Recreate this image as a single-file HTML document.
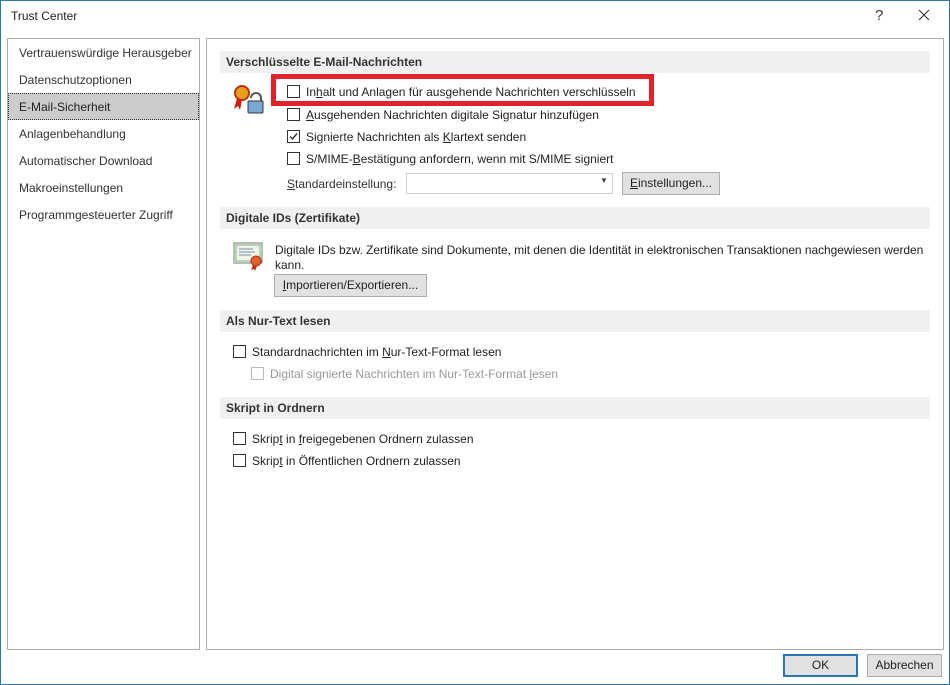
<!DOCTYPE html>
<html><head><meta charset="utf-8"><style>
*{margin:0;padding:0;box-sizing:border-box}
body{width:950px;height:685px;background:#fff;font-family:"Liberation Sans",sans-serif;font-size:12px;color:#222;position:relative;overflow:hidden}
.a{position:absolute;white-space:nowrap}
.win{position:absolute;left:0;top:0;width:950px;height:685px;border:1px solid #2a7ab0}
.panel{position:absolute;border:1px solid #adadad;background:#fff}
.hd{position:absolute;left:220px;width:710px;height:22px;background:#f0f0f0;font-weight:bold;color:#333;padding:4px 0 0 6px}
.cb{position:absolute;width:13px;height:13px;border:1px solid #333;background:#fff}
.cb.dis{border-color:#bbb}
.btn{position:absolute;height:23px;border:1px solid #adadad;background:#e1e1e1;text-align:center;line-height:21px}
u{text-decoration:underline}
.nav{position:absolute;left:19px;color:#333}
</style></head><body>
<div class="win"></div>
<div class="a" style="left:11px;top:9px">Trust Center</div>
<div class="a" style="left:875px;top:7px;font-size:15px;color:#333">?</div>
<svg class="a" style="left:918px;top:9px" width="12" height="12"><path d="M1 1L11 11M11 1L1 11" stroke="#333" stroke-width="1.1"/></svg>

<div class="panel" style="left:7px;top:38px;width:193px;height:612px"></div>
<div class="nav a" style="top:46px">Vertrauenswürdige Herausgeber</div>
<div class="nav a" style="top:73px">Datenschutzoptionen</div>
<div class="a" style="left:8px;top:93px;width:191px;height:27px;background:#cccccc;border:1px dotted #333"></div>
<div class="nav a" style="top:100px;color:#222">E-Mail-Sicherheit</div>
<div class="nav a" style="top:127px">Anlagenbehandlung</div>
<div class="nav a" style="top:154px">Automatischer Download</div>
<div class="nav a" style="top:181px">Makroeinstellungen</div>
<div class="nav a" style="top:208px">Programmgesteuerter Zugriff</div>

<div class="panel" style="left:206px;top:38px;width:738px;height:612px"></div>
<div class="hd" style="top:51px">Verschlüsselte E-Mail-Nachrichten</div>
<svg class="a" style="left:233px;top:84px" width="32" height="30" viewBox="0 0 32 30">
<circle cx="9" cy="9" r="7" fill="#e8a020" stroke="#c03010" stroke-width="2"/>
<path d="M4 14 L1 25 L5 22 L7 26 L9 16Z" fill="#d02010"/>
<path d="M18 14 a5 5 0 0 1 10 0 v4" fill="none" stroke="#555" stroke-width="2"/>
<rect x="15" y="17" width="15" height="12" rx="1" fill="#7aa8d0" stroke="#335" stroke-width="1"/>
</svg>
<div class="a" style="left:271px;top:74px;width:383px;height:32px;border:5px solid #e32129"></div>
<div class="cb" style="left:287px;top:85px"></div>
<div class="a" style="left:306px;top:85px">In<u>h</u>alt und Anlagen für ausgehende Nachrichten verschlüsseln</div>
<div class="cb" style="left:287px;top:108px"></div>
<div class="a" style="left:306px;top:108px"><u>A</u>usgehenden Nachrichten digitale Signatur hinzufügen</div>
<div class="cb" style="left:287px;top:130px"><svg width="11" height="11" style="position:absolute;left:0;top:0"><path d="M2 5.5 L4.5 8 L9 2.5" fill="none" stroke="#333" stroke-width="1.4"/></svg></div>
<div class="a" style="left:306px;top:130px">Signierte Nachrichten als <u>K</u>lartext senden</div>
<div class="cb" style="left:287px;top:152px"></div>
<div class="a" style="left:306px;top:152px">S/MIME-<u>B</u>estätigung anfordern, wenn mit S/MIME signiert</div>
<div class="a" style="left:287px;top:177px;color:#333"><u>S</u>tandardeinstellung:</div>
<div class="a" style="left:406px;top:173px;width:207px;height:21px;border:1px solid #d0d0d0;background:#fff"></div>
<div class="a" style="left:600px;top:176px;font-size:8px;color:#444">▼</div>
<div class="btn" style="left:622px;top:172px;width:98px"><u>E</u>instellungen...</div>

<div class="hd" style="top:207px">Digitale IDs (Zertifikate)</div>
<svg class="a" style="left:233px;top:241px" width="32" height="30" viewBox="0 0 32 30">
<rect x="1" y="2" width="28" height="20" fill="#eef4e8" stroke="#6a8a6a"/>
<rect x="3" y="4" width="24" height="16" fill="none" stroke="#8ab08a"/>
<path d="M6 8h14M6 11h16M6 14h12" stroke="#7a90b0"/>
<circle cx="23" cy="20" r="5" fill="#e06030" stroke="#b03010"/>
<path d="M20 24l-2 5 3-1 1 2 2-5z" fill="#c03010"/>
</svg>
<div class="a" style="left:275px;top:243px;letter-spacing:-0.05px">Digitale IDs bzw. Zertifikate sind Dokumente, mit denen die Identität in elektronischen Transaktionen nachgewiesen werden</div>
<div class="a" style="left:275px;top:258px">kann.</div>
<div class="btn" style="left:274px;top:274px;width:153px"><u>I</u>mportieren/Exportieren...</div>

<div class="hd" style="top:310px">Als Nur-Text lesen</div>
<div class="cb" style="left:233px;top:345px"></div>
<div class="a" style="left:252px;top:345px">Standardnachrichten im <u>N</u>ur-Text-Format lesen</div>
<div class="cb dis" style="left:251px;top:367px"></div>
<div class="a" style="left:270px;top:367px;color:#999">Digital signierte Nachrichten im Nur-Text-Format <u>l</u>esen</div>

<div class="hd" style="top:397px">Skript in Ordnern</div>
<div class="cb" style="left:233px;top:432px"></div>
<div class="a" style="left:252px;top:432px">Skrip<u>t</u> in <u>f</u>reigegebenen Ordnern zulassen</div>
<div class="cb" style="left:233px;top:454px"></div>
<div class="a" style="left:252px;top:454px">Skrip<u>t</u> in Öffentlichen Ordnern zulassen</div>

<div class="btn" style="left:783px;top:654px;width:75px;border:2px solid #2a74b8;line-height:19px">OK</div>
<div class="btn" style="left:867px;top:654px;width:75px">Abbrechen</div>
</body></html>
